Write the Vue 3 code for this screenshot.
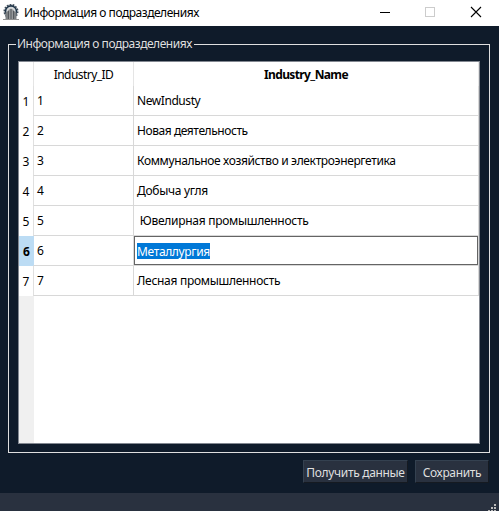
<script setup>
import { ref } from 'vue'

const title = 'Информация о подразделениях'
const current = ref(6)
const rows = [
  { id: 1, name: 'NewIndusty', fit: 'tight' },
  { id: 2, name: 'Новая деятельность', fit: 'tight' },
  { id: 3, name: 'Коммунальное хозяйство и электроэнергетика', fit: 'medium' },
  { id: 4, name: 'Добыча угля', fit: 'loose' },
  { id: 5, name: ' Ювелирная промышленность', fit: 'loose' },
  { id: 6, name: 'Металлургия', fit: 'medium' },
  { id: 7, name: 'Лесная промышленность', fit: 'loose' },
]
const gripRows = [1, 2, 3]
</script>

<template>
  <div class="window">
    <header class="titlebar">
      <svg class="app-icon" width="16" height="16" viewBox="0 0 16 16">
        <circle cx="8" cy="7.4" r="6.7" fill="none" stroke="#43505c" stroke-width="1.6" stroke-dasharray="1.8 1.2" />
        <circle cx="8" cy="7.4" r="5.5" fill="#d5d8da" stroke="#1e3448" stroke-width="1.6" />
        <path d="M2.5 15V8.5L5 7V15zM11 15V7l2.5 1.5V15z" fill="#7c8083" />
        <path d="M5 15V6.2L8 4.4l3 1.8V15z" fill="#96999b" />
        <path d="M5.5 15V7M8 15V5M10.5 15V7" stroke="#55595d" stroke-width="1" />
        <path d="M0 15.5H16" stroke="#929292" />
      </svg>
      <span class="caption">{{ title }}</span>
      <div class="controls">
        <svg width="46" height="26" shape-rendering="crispEdges"><path d="M18 12.5h10" stroke="#000" /></svg>
        <svg width="46" height="26" shape-rendering="crispEdges"><rect x="17.5" y="7.5" width="9" height="9" fill="none" stroke="#ccc" /></svg>
        <svg width="45" height="26"><path d="M17 7l10 10M27 7L17 17" stroke="#000" stroke-width="1.1" /></svg>
      </div>
    </header>

    <main class="content">
      <fieldset class="group">
        <legend>{{ title }}</legend>
        <div class="table">
          <div class="head">
            <span class="corner"></span>
            <span class="col-id">Industry_ID</span>
            <span class="col-name">Industry_Name</span>
          </div>
          <div v-for="r in rows" :key="r.id" class="row">
            <span class="num" :class="{ active: r.id === current }">{{ r.id }}</span>
            <span class="cell id">{{ r.id }}</span>
            <span class="cell name" :class="[{ editing: r.id === current }, r.fit]"><span class="value">{{ r.name }}</span></span>
          </div>
          <div class="rest"></div>
        </div>
      </fieldset>
      <div class="actions">
        <button class="fetch">Получить данные</button>
        <button class="save">Сохранить</button>
      </div>
    </main>

    <footer class="status">
      <div class="grip">
        <div v-for="n in gripRows" :key="n" class="grip-row"><i v-for="d in n" :key="d"></i></div>
      </div>
    </footer>
  </div>
</template>

<style>
body { margin: 0; overflow: hidden; }
</style>

<style scoped>
* { box-sizing: border-box; }
.window {
  width: 499px; height: 511px; display: flex; flex-direction: column;
  background: #0f1b2a; color: #000; font: 12px/16px "Noto Sans", "Open Sans", sans-serif;
  overflow: hidden; white-space: pre;
}
.titlebar { height: 26px; flex: none; display: flex; background: #fff; padding-left: 3px; }
.app-icon { margin-top: 4px; flex: none; }
.caption { margin: 5px 0 0 5px; letter-spacing: -0.47px; }
.controls { display: flex; margin-left: auto; }
.content { flex: 1; padding: 10px 9px 0 8px; }
.group {
  position: relative; width: 482px; height: 417px; margin: 0; padding: 9px 9px 9px;
  border: 1px solid #dfdfdf; min-width: 0;
}
legend { height: 16px; padding: 0 2px 0 1px; margin-left: -2px; color: #dfdfdf; letter-spacing: -0.47px; }
.table {
  width: 462px; height: 383px; border: 1px solid #828790; background: #fff;
  display: flex; flex-direction: column;
}
.head { display: flex; height: 24px; flex: none; text-align: center; line-height: 26px; }
.corner { width: 15px; border-right: 1px solid #e5e5e5; }
.col-id { width: 100px; border-right: 1px solid #e5e5e5; letter-spacing: -0.55px; }
.col-name { flex: 1; border-right: 1px solid #e5e5e5; font-weight: 700; letter-spacing: -0.62px; }
.row { display: flex; height: 30px; flex: none; line-height: 30px; }
.num { width: 14px; text-align: center; line-height: 31px; }
.num.active { width: 15px; margin-right: -1px; background: #bcdcf4; font-weight: 700; }
.cell { height: 30px; border-bottom: 1px solid #d8d8d8; border-right: 1px solid #d8d8d8; padding-left: 3px; }
.cell.id { width: 101px; border-left: 1px solid #e0e0e0; }
.active + .cell.id { border-left-color: transparent; }
.cell.name { flex: 1; }
.tight { letter-spacing: -0.43px; }
.medium { letter-spacing: -0.36px; }
.loose { letter-spacing: -0.29px; }
.cell.editing { box-shadow: inset 0 0 0 1px #646464; padding-top: 7px; }
.editing .value { background: #0078d7; color: #fff; display: block; width: 73px; height: 16px; line-height: 18px; }
.rest { flex: 1; width: 15px; background: #f0f0f0; }
.actions { display: flex; justify-content: flex-end; gap: 7px; padding: 7px 1px 0 0; }
button {
  height: 23px; padding: 0; border: 1px solid; border-color: #344150 #151a21 #151a21 #344150;
  background: #29313f; color: #dfdfdf; font: inherit; line-height: 23px; letter-spacing: -0.33px;
}
.fetch { width: 105px; }
.save { width: 74px; }
.status { height: 18px; flex: none; background: #29313f; display: flex; justify-content: flex-end; padding: 11px 3px 0 0; }
.grip { display: flex; flex-direction: column; align-items: flex-end; gap: 1px; }
.grip-row { display: flex; gap: 1px; }
.grip-row i { width: 2px; height: 2px; background: #b9b9b9; }
</style>
